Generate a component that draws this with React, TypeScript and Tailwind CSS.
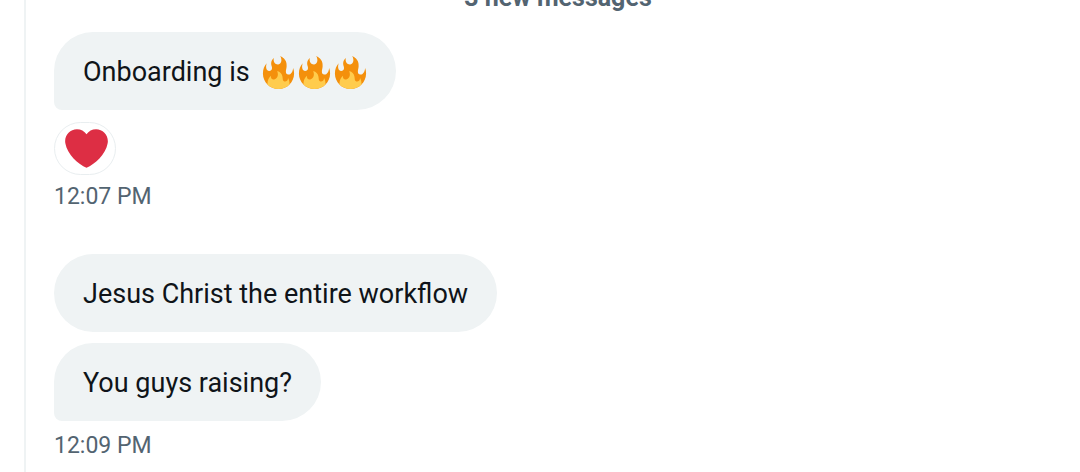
import type { ReactNode } from 'react';

function Fire() {
  return (
    <svg viewBox="0 0 36 36" className="size-[33px]" role="img" aria-label="fire">
      <path
        fill="#F4900C"
        d="M35 19c0-2.062-.367-4.039-1.04-5.868-.46 5.389-3.333 8.157-6.335 6.868-2.812-1.208-.917-5.917-.777-8.164.236-3.809-.012-8.169-6.931-11.794 2.875 5.5.333 8.917-2.333 9.125-2.958.231-5.667-2.542-4.667-7.042-3.238 2.386-3.332 6.402-2.333 9 1.042 2.708-.042 4.958-2.583 5.208-2.84.28-4.418-3.041-2.963-8.333C2.52 10.965 1 14.805 1 19c0 9.389 7.611 17 17 17s17-7.611 17-17z"
      />
      <path
        fill="#FFCC4D"
        d="M28.394 23.999c.148 3.084-2.561 4.293-4.019 3.709-2.106-.843-1.541-2.291-2.083-5.291s-2.625-5.083-5.708-6c2.25 6.333-1.247 8.667-3.08 9.084-1.872.426-3.753-.001-3.968-4.007C7.352 23.668 6 26.676 6 30c0 .368.023.73.055 1.09C9.125 34.124 13.342 36 18 36s8.875-1.876 11.945-4.91c.032-.36.055-.722.055-1.09 0-2.187-.584-4.236-1.606-6.001z"
      />
    </svg>
  );
}

function Heart() {
  return (
    <svg viewBox="0 0 36 36" className="size-[43px]" aria-hidden="true">
      <path
        fill="#DD2E44"
        d="M35.885 11.833c0-5.45-4.418-9.868-9.867-9.868-3.308 0-6.227 1.633-8.018 4.129-1.791-2.496-4.71-4.129-8.017-4.129-5.45 0-9.868 4.417-9.868 9.868 0 .772.098 1.52.266 2.241C1.751 22.587 11.216 31.568 18 34.034c6.783-2.466 16.249-11.447 17.617-19.959.17-.721.268-1.469.268-2.242z"
      />
    </svg>
  );
}

function Bubble({ children, last = false }: { children: ReactNode; last?: boolean }) {
  return (
    <div
      className={`flex items-center gap-3 rounded-[39px] bg-[#eff3f4] px-[29px] pt-[21px] pb-[19px] text-[27px] leading-[38px] text-[#0f1419] ${
        last ? 'rounded-bl-lg' : ''
      }`}
    >
      {children}
    </div>
  );
}

function Time({ children }: { children: ReactNode }) {
  return <time className="text-[23px] leading-8 text-[#536471]">{children}</time>;
}

export default function App() {
  return (
    <div className="flex min-h-screen flex-col overflow-hidden bg-white pl-6 font-['Roboto','Liberation_Sans',sans-serif]">
      <main className="flex flex-1 flex-col border-l-2 border-[#eff3f4] pl-7">
        <h2 className="-mt-[18px] pr-[18px] text-center text-[25px] leading-8 font-bold text-[#536471]">
          3 new messages
        </h2>

        <section className="mt-[18px] flex flex-col items-start">
          <Bubble last>
            <span>Onboarding is</span>
            <span className="flex gap-[3px] pt-px">
              <Fire />
              <Fire />
              <Fire />
            </span>
          </Bubble>
          <button
            type="button"
            aria-label="Heart reaction"
            className="mt-3 mb-[6px] flex h-[53px] items-center rounded-full border border-[#e9eef0] bg-white pr-[7px] pl-[10px]"
          >
            <Heart />
          </button>
          <Time>12:07 PM</Time>
        </section>

        <section className="mt-[41px] flex flex-col items-start">
          <Bubble>Jesus Christ the entire workflow</Bubble>
          <div className="mt-[11px] mb-[9px]">
            <Bubble last>You guys raising?</Bubble>
          </div>
          <Time>12:09 PM</Time>
        </section>
      </main>
    </div>
  );
}
